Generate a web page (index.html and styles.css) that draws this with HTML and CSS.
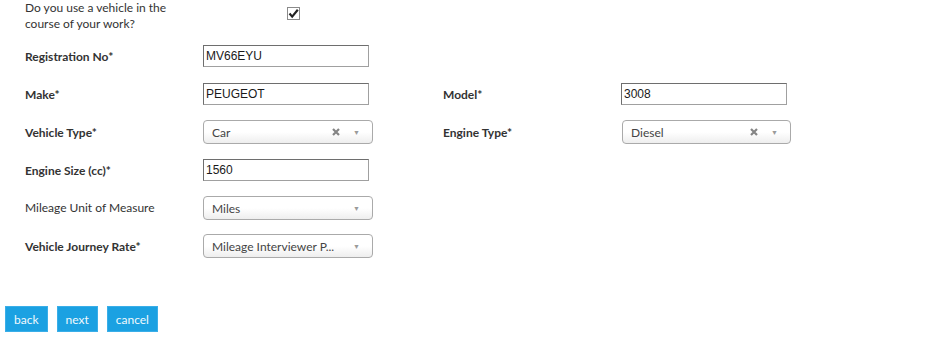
FILE: index.html
```html
<!doctype html>
<html>

<head>
  <title>Vehicle Details</title>
  <meta name="viewport" content="width=device-width, initial-scale=1.0">
  <link rel="stylesheet" href="styles.css">
</head>

<body>
  <form class="vehicle-form">

    <!-- Question -->
    <div class="form-row question-row">
      <label class="field-label plain">Do you use a vehicle in the course of your work?</label>
      <div class="field-control check-cell">
        <span class="check-box">
          <svg width="11" height="11" viewBox="0 0 11 11"><path d="M1.5 5.5 L4.2 8.6 L9.8 1.8" fill="none" stroke="#222" stroke-width="2.2"/></svg>
        </span>
      </div>
    </div>

    <div class="form-row">
      <label class="field-label">Registration No*</label>
      <div class="field-control"><input class="text-input" type="text" value="MV66EYU"></div>
    </div>

    <div class="form-row">
      <label class="field-label">Make*</label>
      <div class="field-control"><input class="text-input" type="text" value="PEUGEOT"></div>
      <label class="field-label">Model*</label>
      <div class="field-control"><input class="text-input" type="text" value="3008"></div>
    </div>

    <div class="form-row">
      <label class="field-label">Vehicle Type*</label>
      <div class="field-control">
        <div class="select-box">
          <span class="select-text">Car</span>
          <svg class="select-clear" width="8" height="8" viewBox="0 0 8 8"><path d="M1 1 L7 7 M7 1 L1 7" stroke="#858585" stroke-width="2.2"/></svg>
          <span class="select-arrow">&#x25BC;</span>
        </div>
      </div>
      <label class="field-label">Engine Type*</label>
      <div class="field-control">
        <div class="select-box wide">
          <span class="select-text">Diesel</span>
          <svg class="select-clear" width="8" height="8" viewBox="0 0 8 8"><path d="M1 1 L7 7 M7 1 L1 7" stroke="#858585" stroke-width="2.2"/></svg>
          <span class="select-arrow">&#x25BC;</span>
        </div>
      </div>
    </div>

    <div class="form-row">
      <label class="field-label">Engine Size (cc)*</label>
      <div class="field-control"><input class="text-input" type="text" value="1560"></div>
    </div>

    <div class="form-row">
      <label class="field-label plain">Mileage Unit of Measure</label>
      <div class="field-control">
        <div class="select-box">
          <span class="select-text">Miles</span>
          <span class="select-arrow">&#x25BC;</span>
        </div>
      </div>
    </div>

    <div class="form-row">
      <label class="field-label">Vehicle Journey Rate*</label>
      <div class="field-control">
        <div class="select-box">
          <span class="select-text">Mileage Interviewer P...</span>
          <span class="select-arrow">&#x25BC;</span>
        </div>
      </div>
    </div>

    <!-- Buttons -->
    <div class="button-bar">
      <button type="button" class="button">back</button>
      <button type="button" class="button">next</button>
      <button type="button" class="button">cancel</button>
    </div>
  </form>
</body>

</html>
```

FILE: styles.css
```css
body {
  background-color: #ffffff;
  font-family: Lato, "Open Sans", sans-serif;
  color: #333333;
  margin: 0;
  padding: 0;
}

.form-row {
  display: grid;
  grid-template-columns: 178px 240px 178px 175px;
  align-items: center;
  height: 38px;
  padding-left: 25px;
}

.question-row {
  height: 37px;
  align-items: start;
}

.field-label {
  font-size: 12px;
  font-weight: bold;
  color: #333333;
}

.field-label.plain {
  font-weight: normal;
  line-height: 16px;
  width: 150px;
}

.field-control {
  display: flex;
  align-items: center;
}

.check-cell {
  padding-top: 7px;
  padding-left: 84px;
}

.check-box {
  display: flex;
  align-items: center;
  justify-content: center;
  width: 11px;
  height: 11px;
  border: 1px solid #8a8a8a;
  background: #ffffff;
}

.text-input {
  width: 166px;
  height: 22px;
  box-sizing: border-box;
  border: 1px solid #a0a0a0;
  border-top-color: #6e6e6e;
  border-left-color: #6e6e6e;
  padding: 0 2px;
  margin: 0;
  font-family: "Liberation Sans", Arial, sans-serif;
  font-size: 12px;
  color: #1a1a1a;
  outline: none;
}

.select-box {
  display: flex;
  align-items: center;
  width: 170px;
  height: 24px;
  box-sizing: border-box;
  border: 1px solid #aaaaaa;
  border-radius: 4px;
  background: linear-gradient(to top, #eeeeee 0%, #ffffff 50%);
  padding: 0 12px 0 8px;
  font-size: 12px;
  color: #444444;
}

.select-box.wide {
  width: 169px;
  margin-left: 1px;
}

.select-text {
  flex-grow: 1;
  white-space: nowrap;
  overflow: hidden;
}

.select-clear {
  margin-right: 13px;
}

.select-arrow {
  font-size: 7px;
  color: #9a9a9a;
}

.button-bar {
  display: flex;
  gap: 9px;
  padding-left: 5px;
  margin-top: 41px;
}

.button {
  background-color: #1ba1e2;
  border: 1px solid #3aaee8;
  color: #f2f9fd;
  height: 26px;
  padding: 0 8px;
  font-family: Lato, "Open Sans", sans-serif;
  font-size: 12px;
  cursor: pointer;
}

.button:hover {
  background-color: #1590cc;
}
```
